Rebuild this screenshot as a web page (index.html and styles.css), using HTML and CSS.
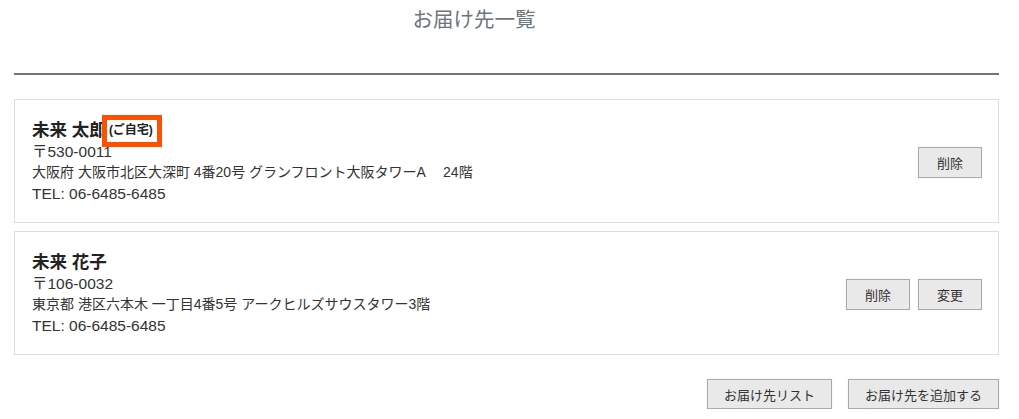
FILE: index.html
```html
<!DOCTYPE html>
<html lang="ja">
<head>
    <meta charset="UTF-8">
    <meta name="viewport" content="width=device-width, initial-scale=1.0">
    <title>お届け先一覧</title>
    <link rel="stylesheet" href="styles.css">
</head>
<body>
    <div class="container">
        <div class="page-header">
            <h2>お届け先一覧</h2>
        </div>

        <div class="address-list">
            <div class="address-card">
                <div class="address-info">
                    <p class="name">未来 太郎<span class="tag">(ご自宅)</span></p>
                    <p class="zip">〒530-0011</p>
                    <p class="addr">大阪府 大阪市北区大深町 4番20号 グランフロント大阪タワーA　 24階</p>
                    <p class="tel">TEL: 06-6485-6485</p>
                </div>
                <div class="actions">
                    <button class="btn">削除</button>
                </div>
            </div>

            <div class="address-card">
                <div class="address-info">
                    <p class="name">未来 花子</p>
                    <p class="zip">〒106-0032</p>
                    <p class="addr">東京都 港区六本木 一丁目4番5号 アークヒルズサウスタワー3階</p>
                    <p class="tel">TEL: 06-6485-6485</p>
                </div>
                <div class="actions">
                    <button class="btn">削除</button>
                    <button class="btn">変更</button>
                </div>
            </div>
        </div>

        <div class="footer-actions">
            <button class="btn">お届け先リスト</button>
            <button class="btn">お届け先を追加する</button>
        </div>
    </div>
</body>
</html>
```

FILE: styles.css
```css
/* General Styles */
body {
    margin: 0;
    padding: 0;
    background: #fff;
    font-family: "Liberation Sans", "Noto Sans CJK JP", sans-serif;
    color: #333;
}

.container {
    padding: 0 20px 0 14px;
}

/* Header */
.page-header {
    height: 73px;
    border-bottom: 2px solid #6c757d;
    padding-right: 65px;
    text-align: center;
}

.page-header h2 {
    margin: 0;
    padding-top: 4px;
    font-size: 20.5px;
    font-weight: 400;
    line-height: 31px;
    color: #6c757d;
}

/* Address Cards */
.address-list {
    display: flex;
    flex-direction: column;
    gap: 8px;
    margin-top: 24px;
}

.address-card {
    display: flex;
    align-items: center;
    justify-content: space-between;
    border: 1px solid #ddd;
    padding: 20px 16px 18px 17px;
}

.address-info p {
    margin: 0;
    line-height: 21px;
}

.name {
    font-size: 17.5px;
    font-weight: 700;
    color: #222;
    line-height: 22px;
}

.tag {
    position: relative;
    margin-left: 2px;
    font-size: 12px;
    font-weight: 700;
    vertical-align: 2px;
}

/* Highlight box around the tag */
.tag::after {
    content: "";
    position: absolute;
    top: -8px;
    bottom: -10px;
    left: -7px;
    right: -9px;
    border: 5px solid #ff4f00;
}

.zip,
.tel {
    font-size: 15.5px;
}

.addr {
    font-size: 14px;
}

.actions {
    display: flex;
    gap: 8px;
}

/* Buttons */
.btn {
    height: 31px;
    min-width: 64px;
    padding: 0 15px;
    background: #e9e9e9;
    border: 1px solid #aaa;
    box-shadow: 0 0 1px rgba(0, 0, 0, 0.15);
    font-family: inherit;
    font-size: 13px;
    color: #333;
    cursor: pointer;
}

.btn:hover {
    background: #dedede;
}

.footer-actions {
    display: flex;
    justify-content: flex-end;
    gap: 16px;
    margin-top: 24px;
}

.footer-actions .btn {
    height: 30px;
    padding: 0 16px;
}
```
